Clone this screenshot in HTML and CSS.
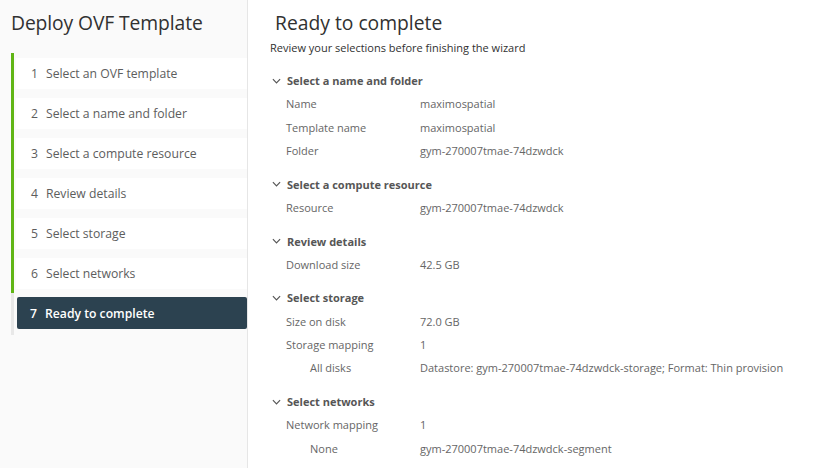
FILE: index.html
```html
<!DOCTYPE html>
<html>
<head>
<meta charset="utf-8">
<link rel="stylesheet" href="styles.css">
</head>
<body>
<div class="wizard">
  <aside class="sidebar">
    <h1 class="wiz-title">Deploy OVF Template</h1>
    <ol class="steps">
      <li class="step done"><div class="step-box"><span class="num">1</span>Select an OVF template</div></li>
      <li class="step done"><div class="step-box"><span class="num">2</span>Select a name and folder</div></li>
      <li class="step done"><div class="step-box"><span class="num">3</span>Select a compute resource</div></li>
      <li class="step done"><div class="step-box"><span class="num">4</span>Review details</div></li>
      <li class="step done"><div class="step-box"><span class="num">5</span>Select storage</div></li>
      <li class="step done"><div class="step-box"><span class="num">6</span>Select networks</div></li>
      <li class="step current"><div class="step-box"><span class="num">7</span>Ready to complete</div></li>
    </ol>
  </aside>
  <main class="content">
    <h2 class="page-title">Ready to complete</h2>
    <p class="subtitle">Review your selections before finishing the wizard</p>

    <section class="group">
      <div class="group-head"><svg class="chev" viewBox="0 0 10 6"><path d="M1 1 L5 5 L9 1"/></svg>Select a name and folder</div>
      <div class="row"><span class="lbl">Name</span><span class="val">maximospatial</span></div>
      <div class="row"><span class="lbl">Template name</span><span class="val">maximospatial</span></div>
      <div class="row"><span class="lbl">Folder</span><span class="val">gym-270007tmae-74dzwdck</span></div>
    </section>

    <section class="group">
      <div class="group-head"><svg class="chev" viewBox="0 0 10 6"><path d="M1 1 L5 5 L9 1"/></svg>Select a compute resource</div>
      <div class="row"><span class="lbl">Resource</span><span class="val">gym-270007tmae-74dzwdck</span></div>
    </section>

    <section class="group">
      <div class="group-head"><svg class="chev" viewBox="0 0 10 6"><path d="M1 1 L5 5 L9 1"/></svg>Review details</div>
      <div class="row"><span class="lbl">Download size</span><span class="val">42.5 GB</span></div>
    </section>

    <section class="group">
      <div class="group-head"><svg class="chev" viewBox="0 0 10 6"><path d="M1 1 L5 5 L9 1"/></svg>Select storage</div>
      <div class="row"><span class="lbl">Size on disk</span><span class="val">72.0 GB</span></div>
      <div class="row"><span class="lbl">Storage mapping</span><span class="val">1</span></div>
      <div class="row sub"><span class="lbl">All disks</span><span class="val">Datastore: gym-270007tmae-74dzwdck-storage; Format: Thin provision</span></div>
    </section>

    <section class="group">
      <div class="group-head"><svg class="chev" viewBox="0 0 10 6"><path d="M1 1 L5 5 L9 1"/></svg>Select networks</div>
      <div class="row"><span class="lbl">Network mapping</span><span class="val">1</span></div>
      <div class="row sub"><span class="lbl">None</span><span class="val">gym-270007tmae-74dzwdck-segment</span></div>
    </section>
  </main>
</div>
</body>
</html>
```
FILE: styles.css
```css
html, body {
  margin: 0;
  padding: 0;
  height: 100%;
  overflow: hidden;
  background: #ffffff;
  font-family: "Open Sans", "Liberation Sans", sans-serif;
  color: #565656;
}

.wizard {
  display: flex;
  height: 468px;
}

.sidebar {
  width: 247px;
  flex: none;
  background: #fafafa;
  border-right: 1px solid #e6e6e6;
  box-sizing: content-box;
}

.wiz-title {
  margin: 0;
  padding: 9px 0 0 11px;
  height: 53px;
  box-sizing: border-box;
  font-size: 19.3px;
  font-weight: 400;
  color: #313131;
  letter-spacing: -0.1px;
}

.steps {
  list-style: none;
  margin: 0;
  padding: 0 0 0 11px;
}

.step {
  height: 40px;
  border-left: 3px solid #60b515;
  box-sizing: border-box;
  padding: 5px 0 4px 2px;
}

.step.current {
  border-left-color: #e8e8e8;
  padding: 4px 0 4px 3px;
  height: 42px;
}

.step-box {
  height: 31px;
  background: #ffffff;
  display: flex;
  align-items: center;
  padding-left: 15px;
  font-size: 12.2px;
  color: #5d5d5d;
}

.step.current .step-box {
  height: 32px;
  background: #2c4250;
  color: #ffffff;
  font-weight: 600;
  border-radius: 2px;
  padding-left: 13px;
}

.num {
  display: inline-block;
  width: 15px;
}

.content {
  flex: 1;
  padding-left: 22px;
}

.page-title {
  margin: 0;
  padding: 9px 0 0 5px;
  height: 41px;
  box-sizing: border-box;
  font-size: 19.3px;
  font-weight: 400;
  color: #313131;
}

.subtitle {
  margin: 0;
  font-size: 11px;
  color: #313131;
  height: 28px;
  line-height: 14px;
}

.group {
  margin-bottom: 10.5px;
}

.group-head {
  display: flex;
  align-items: center;
  height: 23px;
  font-size: 11px;
  font-weight: 700;
  color: #565656;
  margin-left: 2px;
}

.chev {
  width: 9px;
  height: 6px;
  margin-right: 6px;
  fill: none;
  stroke: #565656;
  stroke-width: 1.3;
}

.row {
  display: flex;
  align-items: center;
  height: 23.4px;
  font-size: 11px;
  color: #666666;
}

.lbl {
  width: 134px;
  padding-left: 16px;
  flex: none;
  color: #666666;
}

.row.sub .lbl {
  width: 110px;
  padding-left: 40px;
}

.val {
  color: #666666;
}
```
